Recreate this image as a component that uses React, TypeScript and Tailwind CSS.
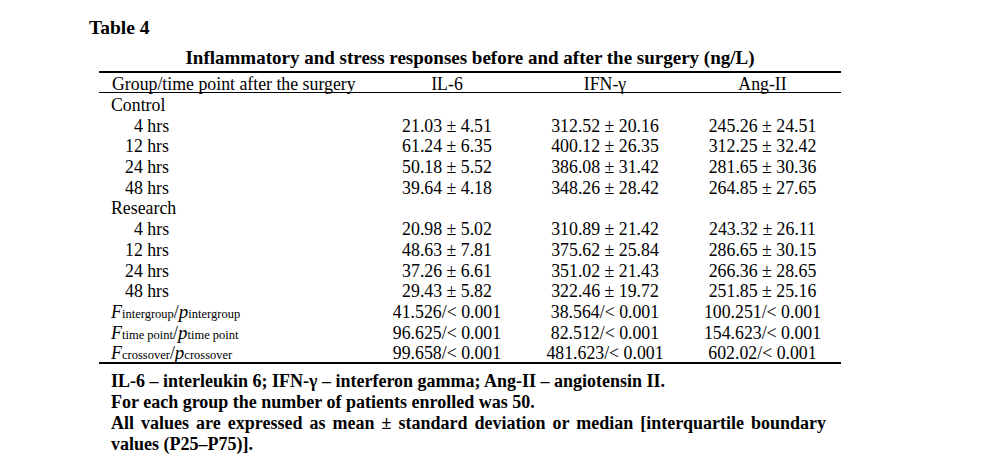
import React from 'react';

type Row = { label: React.ReactNode; kind: 'group' | 'time' | 'stat'; vals?: string[] };

const Sub = ({ f, p }: { f: string; p: string }) => (
  <span>
    <span className="italic text-[18px]">F</span>
    <span className="text-[12.5px]">{f}</span>
    <span>/</span>
    <span className="italic text-[19px]">p</span>
    <span className="text-[12.5px]">{p}</span>
  </span>
);

const rows: Row[] = [
  { label: 'Control', kind: 'group' },
  { label: '4 hrs', kind: 'time', vals: ['21.03 ± 4.51', '312.52 ± 20.16', '245.26 ± 24.51'] },
  { label: '12 hrs', kind: 'time', vals: ['61.24 ± 6.35', '400.12 ± 26.35', '312.25 ± 32.42'] },
  { label: '24 hrs', kind: 'time', vals: ['50.18 ± 5.52', '386.08 ± 31.42', '281.65 ± 30.36'] },
  { label: '48 hrs', kind: 'time', vals: ['39.64 ± 4.18', '348.26 ± 28.42', '264.85 ± 27.65'] },
  { label: 'Research', kind: 'group' },
  { label: '4 hrs', kind: 'time', vals: ['20.98 ± 5.02', '310.89 ± 21.42', '243.32 ± 26.11'] },
  { label: '12 hrs', kind: 'time', vals: ['48.63 ± 7.81', '375.62 ± 25.84', '286.65 ± 30.15'] },
  { label: '24 hrs', kind: 'time', vals: ['37.26 ± 6.61', '351.02 ± 21.43', '266.36 ± 28.65'] },
  { label: '48 hrs', kind: 'time', vals: ['29.43 ± 5.82', '322.46 ± 19.72', '251.85 ± 25.16'] },
  { label: <Sub f="intergroup" p="intergroup" />, kind: 'stat', vals: ['41.526/< 0.001', '38.564/< 0.001', '100.251/< 0.001'] },
  { label: <Sub f="time point" p="time point" />, kind: 'stat', vals: ['96.625/< 0.001', '82.512/< 0.001', '154.623/< 0.001'] },
  { label: <Sub f="crossover" p="crossover" />, kind: 'stat', vals: ['99.658/< 0.001', '481.623/< 0.001', '602.02/< 0.001'] },
];

export default function App() {
  return (
    <div className="w-[986px] h-[469px] bg-white text-black font-['Liberation_Serif',serif] text-[17.8px] overflow-hidden">
      <div className="pl-[89px] pt-[18px] leading-[20px] font-bold text-[19.5px]">Table 4</div>

      <div className="ml-[99px] w-[742px]">
        <div className="mt-[10px] leading-[20px] font-bold text-center text-[19px]">
          Inflammatory and stress responses before and after the surgery (ng/L)
        </div>

        <div className="mt-[3px] border-t-2 border-b-2 border-black">
          <div className="grid grid-cols-[269px_158px_158px_157px] h-[20px] pt-[1px] leading-[20px] border-b border-black">
            <div className="pl-[13px] whitespace-nowrap">Group/time point after the surgery</div>
            <div className="text-center">IL-6</div>
            <div className="text-center">IFN-γ</div>
            <div className="text-center">Ang-II</div>
          </div>
          {rows.map((r, i) => {
            const twoDigit = typeof r.label === 'string' && /^\d\d/.test(r.label);
            const pad =
              r.kind === 'group' ? 'pl-[12px]' : r.kind === 'stat' ? 'pl-[12px]' : twoDigit ? 'pl-[26px]' : 'pl-[35px]';
            return (
              <div key={i} className="grid grid-cols-[269px_158px_158px_157px] h-[20.7px] pt-[2px] leading-[20.7px]">
                <div className={`${pad} whitespace-nowrap`}>{r.label}</div>
                {(r.vals ?? ['', '', '']).map((v, j) => (
                  <div key={j} className="text-center whitespace-nowrap">
                    {v}
                  </div>
                ))}
              </div>
            );
          })}
        </div>
      </div>

      <div className="ml-[111px] w-[715px] mt-[7px] font-bold leading-[21px] text-[18px]">
        <p>IL-6 – interleukin 6; IFN-γ – interferon gamma; Ang-II – angiotensin II.</p>
        <p>For each group the number of patients enrolled was 50.</p>
        <p className="text-justify">
          All values are expressed as mean ± standard deviation or median [interquartile boundary values (P25–P75)].
        </p>
      </div>
    </div>
  );
}
